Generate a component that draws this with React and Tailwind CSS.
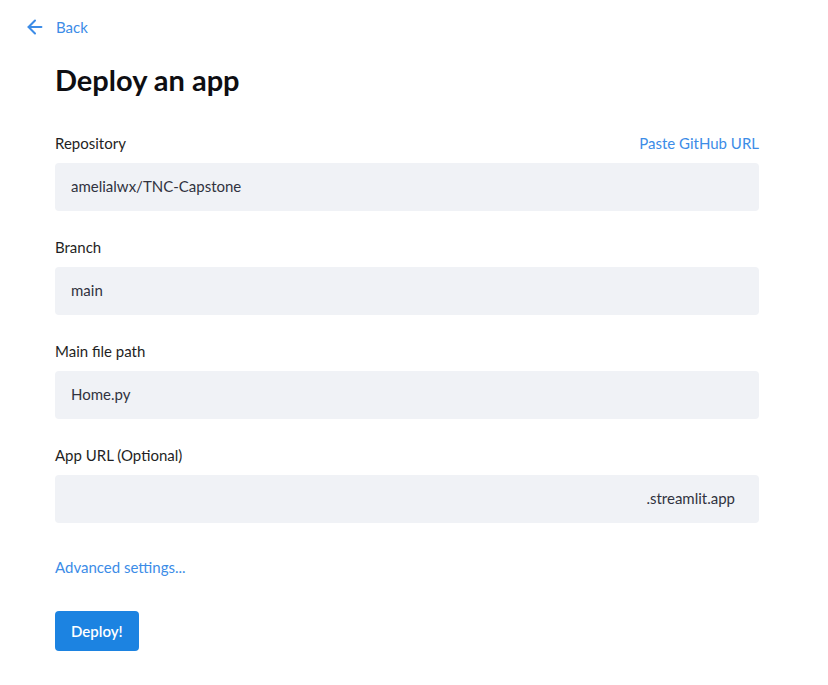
import { ArrowLeft } from 'lucide-react';

const FIELDS = [
  { label: 'Repository', value: 'amelialwx/TNC-Capstone', extra: 'Paste GitHub URL' },
  { label: 'Branch', value: 'main' },
  { label: 'Main file path', value: 'Home.py' },
];

function Field({ label, value, extra }) {
  return (
    <div className="flex flex-col">
      <div className="flex h-[22px] items-center justify-between text-[15px] text-[#1f1f24]">
        <span>{label}</span>
        {extra && <span className="text-[#3c8ce7]">{extra}</span>}
      </div>
      <div className="mt-2 flex h-12 items-center rounded bg-[#f0f2f6] px-4 text-[15px] text-[#31333f]">
        {value}
      </div>
    </div>
  );
}

export default function App() {
  return (
    <div className="min-h-[685px] bg-white font-['Lato',sans-serif]">
      <div className="flex items-center gap-[10px] pl-[24px] pt-[16px] text-[15px] text-[#3c8ce7]">
        <ArrowLeft size={22} strokeWidth={2.2} />
        <span>Back</span>
      </div>

      <div className="box-content w-[704px] pl-[55px]">
        <h1 className="mt-[23px] text-[29px] font-bold leading-[36px] text-[#0e0e12]">
          Deploy an app
        </h1>

        <div className="mt-[35px] flex flex-col gap-[26px]">
          {FIELDS.map((f) => (
            <Field key={f.label} {...f} />
          ))}
          <div className="flex flex-col">
            <div className="flex h-[22px] items-center text-[15px] text-[#1f1f24]">
              App URL (Optional)
            </div>
            <div className="mt-2 flex h-12 items-center justify-end rounded bg-[#f0f2f6] px-6 text-[15px] text-[#31333f]">
              .streamlit.app
            </div>
          </div>
        </div>

        <div className="mt-[33px] text-[15px] text-[#3c8ce7]">Advanced settings...</div>

        <button className="mt-[33px] h-10 rounded bg-[#1c83e1] px-4 text-[15px] font-semibold text-white">
          Deploy!
        </button>
      </div>
    </div>
  );
}
